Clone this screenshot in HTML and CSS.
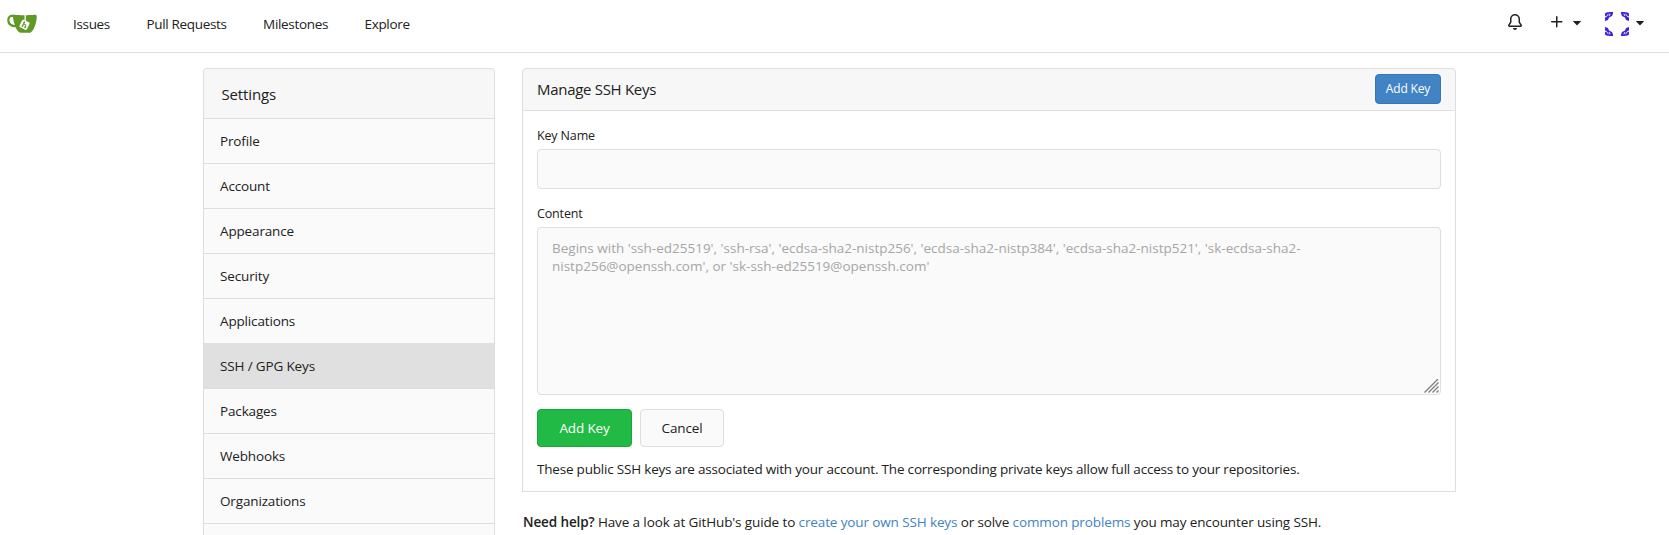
FILE: index.html
```html
<!DOCTYPE html>
<html lang="en">
<head>
<meta charset="utf-8">
<title>SSH / GPG Keys</title>
<link rel="stylesheet" href="styles.css">
</head>
<body>
<nav class="navbar">
  <a class="logo" aria-label="Home">
    <svg width="30" height="30" viewBox="0 0 640 640">
      <path fill="#609926" d="M622.7 149.8c-4.100-4.100-9.600-4-9.600-4s-117.200 6.600-177.900 8c-13.300.3-26.500.6-39.600.7v117.200c-5.500-2.600-11.100-5.300-16.600-7.900 0-36.400-.1-109.200-.1-109.200-29 .4-89.200-2.200-89.200-2.200s-141.400-7.100-156.800-8.500c-9.800-.6-22.500-2.100-39 1.500-8.700 1.800-33.500 7.400-53.800 26.900C-4.900 212.400 6.600 276.200 8 285.800c1.700 11.700 6.900 44.200 31.700 72.500 45.800 56.100 144.400 54.800 144.400 54.800s12.100 28.900 30.600 55.500c25 33.100 50.700 58.900 75.700 62 63 0 188.900-.1 188.900-.1s12 .1 28.300-10.300c14-8.500 26.500-23.400 26.500-23.400s12.900-13.800 30.900-45.300c5.500-9.700 10.100-19.100 14.100-28 0 0 55.200-117.100 55.200-231.100-1.100-34.500-9.600-40.600-11.600-42.600zM125.600 353.900c-25.900-8.500-36.900-18.700-36.900-18.700S69.600 321.800 60 295.400c-16.500-44.200-1.400-71.200-1.400-71.200s8.400-22.500 38.500-30c13.800-3.700 31-3.100 31-3.100s7.100 59.400 15.700 94.200c7.200 29.200 24.800 77.700 24.800 77.700s-26.100-3.100-43-9.100z"/>
      <path d="M387 150v125" stroke="#fff" stroke-width="20"/>
      <g transform="rotate(26 374 358)"><rect x="286" y="270" width="176" height="176" rx="28" fill="#fff"/><path d="M346 300v112M346 350h34q28 0 28 24v38" fill="none" stroke="#609926" stroke-width="24"/><circle cx="346" cy="316" r="18" fill="#609926"/><circle cx="346" cy="402" r="18" fill="#609926"/><circle cx="408" cy="402" r="18" fill="#609926"/></g>
    </svg>
  </a>
  <div class="links"><a>Issues</a><a>Pull Requests</a><a>Milestones</a><a>Explore</a></div>
  <div class="tools">
    <svg class="icon" width="16" height="16" viewBox="0 0 16 16"><path d="M8 16a2 2 0 0 0 1.985-1.750c.017-.137-.097-.25-.235-.25h-3.500c-.138 0-.252.113-.235.25A2 2 0 0 0 8 16ZM3 5a5 5 0 0 1 10 0v2.947c0 .05.015.098.042.139l1.703 2.555A1.519 1.519 0 0 1 13.482 13H2.518a1.516 1.516 0 0 1-1.263-2.360l1.703-2.554A.255.255 0 0 0 3 7.947Zm5-3.500A3.500 3.500 0 0 0 4.500 5v2.947c0 .346-.102.683-.294.970l-1.703 2.556a.017.017 0 0 0-.003.010l.001.006c0 .002.002.004.004.006l.006.004.007.001h10.964l.007-.001.006-.004.004-.006.001-.007a.017.017 0 0 0-.003-.010l-1.703-2.554a1.745 1.745 0 0 1-.294-.970V5A3.500 3.500 0 0 0 8 1.500Z"/></svg>
    <svg class="icon plus" width="16" height="16" viewBox="0 0 16 16"><path d="M7.750 2a.75.75 0 0 1 .75.75V7h4.250a.75.75 0 0 1 0 1.500H8.500v4.250a.75.75 0 0 1-1.500 0V8.500H2.750a.75.75 0 0 1 0-1.500H7V2.750A.75.75 0 0 1 7.750 2Z"/></svg>
    <svg class="icon c1" width="18" height="18" viewBox="0 0 16 16"><path d="m4.427 7.427 3.396 3.396a.25.25 0 0 0 .354 0l3.396-3.396A.25.25 0 0 0 11.396 7H4.604a.25.25 0 0 0-.177.427Z"/></svg>
    <svg class="avatar" width="24" height="24" viewBox="0 0 24 24"><defs><path id="corner" fill-rule="evenodd" d="M0 1.500 1.500.500 3.500 0 4 1.500 2.500 2.500 1 4.500 0 4ZM4 0H8V1.500L7 4 4 5.500 3 8 0 9V5.500L1.500 5 3 3 4 1.500ZM4.500 2 5.500 1.500 5 3.500 3.500 4Z"/></defs><g fill="#4023dc"><use href="#corner"/><use href="#corner" transform="matrix(-1 0 0 1 24 0)"/><use href="#corner" transform="matrix(1 0 0 -1 0 24)"/><use href="#corner" transform="rotate(180 12 12)"/></g></svg>
    <svg class="icon c2" width="18" height="18" viewBox="0 0 16 16"><path d="m4.427 7.427 3.396 3.396a.25.25 0 0 0 .354 0l3.396-3.396A.25.25 0 0 0 11.396 7H4.604a.25.25 0 0 0-.177.427Z"/></svg>
  </div>
</nav>
<div class="page">
  <aside class="menu">
    <div class="menu-head">Settings</div>
    <a class="item">Profile</a>
    <a class="item">Account</a>
    <a class="item">Appearance</a>
    <a class="item">Security</a>
    <a class="item">Applications</a>
    <a class="item active">SSH / GPG Keys</a>
    <a class="item">Packages</a>
    <a class="item">Webhooks</a>
    <a class="item">Organizations</a>
    <a class="item last"></a>
  </aside>
  <main class="content">
    <h4 class="panel-head"><span>Manage SSH Keys</span><button class="btn-primary">Add Key</button></h4>
    <form class="panel">
      <label for="name">Key Name</label>
      <input id="name" class="field">
      <label for="body">Content</label>
      <div class="area-wrap">
        <textarea id="body" class="field area" placeholder="Begins with 'ssh-ed25519', 'ssh-rsa', 'ecdsa-sha2-nistp256', 'ecdsa-sha2-nistp384', 'ecdsa-sha2-nistp521', 'sk-ecdsa-sha2-nistp256@openssh.com', or 'sk-ssh-ed25519@openssh.com'"></textarea>
        <svg class="grip" width="15" height="14" viewBox="0 0 15 14"><path d="M.500 13.500 14 0M4.500 13.500 14.500 3.500M8.500 13.500 14.500 7.500M12.500 13.500 14.500 11.500" stroke="#7d7d7d" stroke-width="1.300"/></svg>
      </div>
      <div class="buttons"><button type="button" class="btn green">Add Key</button><button type="button" class="btn">Cancel</button></div>
      <p class="note">These public SSH keys are associated with your account. The corresponding private keys allow full access to your repositories.</p>
    </form>
    <p class="help"><strong>Need help?</strong> Have a look at GitHub's guide to <a>create your own SSH keys</a> or solve <a>common problems</a> you may encounter using SSH.</p>
  </main>
</div>
</body>
</html>
```
FILE: styles.css
```css
* { box-sizing: border-box; }
body {
  margin: 0;
  height: 535px;
  overflow: hidden;
  background: #fff;
  color: #212121;
  font: 13.5px/20px "Open Sans", "Noto Sans", sans-serif;
  letter-spacing: -0.15px;
}
button, input, textarea { font: inherit; letter-spacing: inherit; color: inherit; margin: 0; }
.navbar { height: 53px; border-bottom: 1px solid #dedede; display: flex; align-items: center; padding: 0 20px 4px 7px; }
.logo { display: flex; width: 66px; margin-bottom: 3px; }
.links { display: flex; gap: 36.5px; letter-spacing: -0.33px; }
.tools { margin-left: auto; display: flex; align-items: center; fill: #212121; }
.icon { margin-bottom: 4px; }
.plus { margin-left: 26px; }
.c1 { margin-left: 3px; }
.avatar { margin-left: 19px; }
.c2 { margin-left: 2px; }
.page { height: 482px; overflow: hidden; display: flex; align-items: flex-start; gap: 27px; padding: 15px 0 0 203px; }
.menu { width: 292px; border: 1px solid #dedede; border-bottom: 0; border-radius: 4px 4px 0 0; background: #fafafa; }
.menu-head { height: 49px; padding: 15px 17.5px; background: #f7f7f7; border-radius: 4px 4px 0 0; font-size: 15px; }
.item { display: block; height: 45px; border-top: 1px solid #dedede; padding: 12px 16px; }
.active { background: #e0e0e0; border-color: #e0e0e0; }
.last { height: 12px; padding: 0; }
.content { width: 934px; }
.panel-head { margin: 0; height: 43px; border: 1px solid #dedede; border-radius: 4px 4px 0 0; background: #f7f7f7; display: flex; align-items: center; justify-content: space-between; padding: 0 14px 2px; font-size: 15px; font-weight: 400; letter-spacing: -0.3px; }
.btn-primary { width: 66px; height: 30px; padding: 0; border: 1px solid #3b76b0; border-radius: 4px; background: #4183c4; color: #fff; font-size: 12px; letter-spacing: -0.15px; }
.panel { border: 1px solid #dedede; border-top: 0; height: 381px; padding: 15px 14px 0; display: flex; flex-direction: column; }
label { font-size: 12.5px; line-height: 20px; height: 23px; }
.field { display: block; width: 100%; height: 40px; border: 1px solid #dedede; border-radius: 4px; background: #fafafa; margin-bottom: 15px; outline: 0; flex: none; }
.area-wrap { position: relative; margin-bottom: 14px; }
.area { height: 168px; margin: 0; padding: 11px 14px; line-height: 18px; resize: none; letter-spacing: 0; }
.area::placeholder { color: #a6a6a6; }
.grip { position: absolute; right: 2px; bottom: 2px; }
.buttons { display: flex; gap: 8px; }
.btn { width: 84px; height: 38px; padding: 0; border: 1px solid #dedede; border-radius: 4px; background: #fafafa; }
.green { width: 95px; background: #21ba45; border-color: #1ea43d; color: #fff; }
.note { margin: 12px 0 0; white-space: nowrap; letter-spacing: -0.2px; }
.help { margin: 20px 0 0 1px; white-space: nowrap; letter-spacing: -0.12px; }
.help a { color: #4183c4; }
.help strong { font-weight: 600; }
```
